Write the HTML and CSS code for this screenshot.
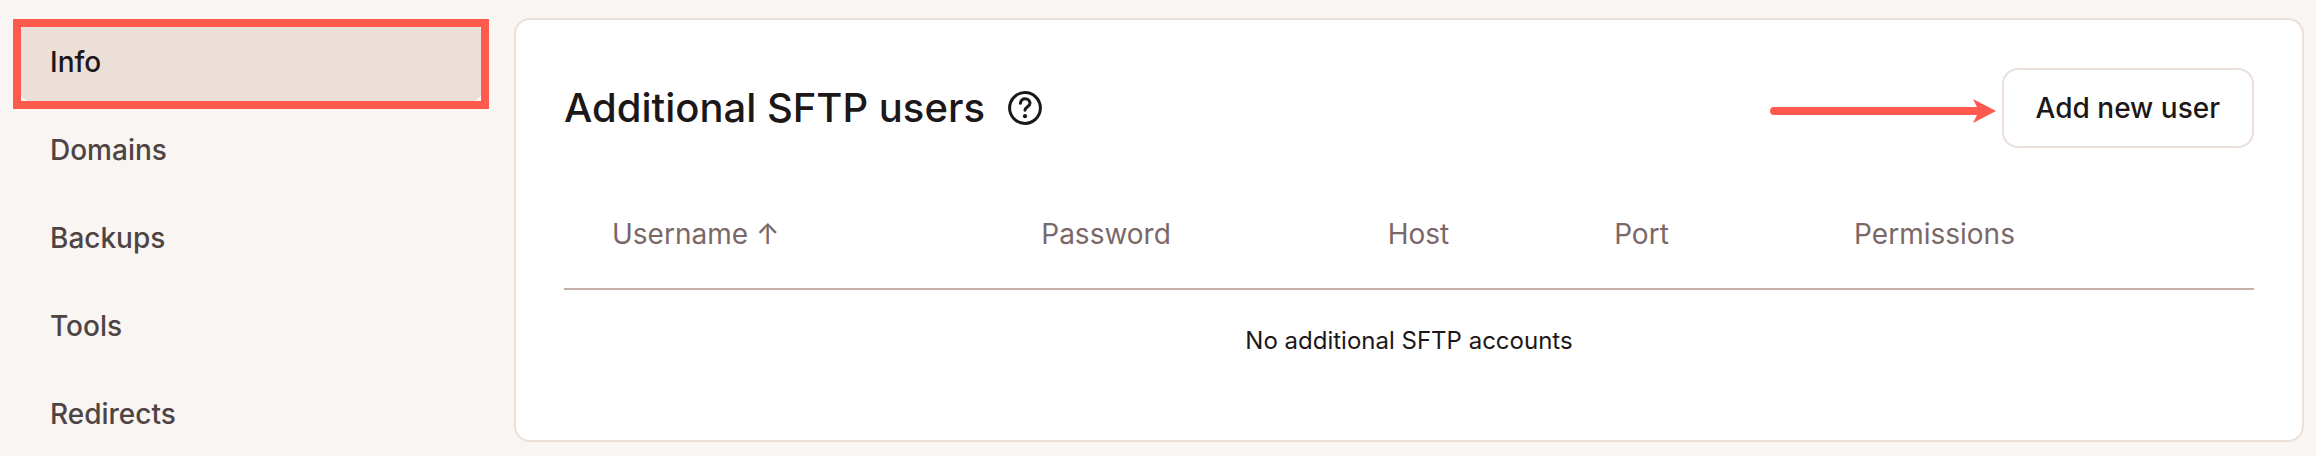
FILE: index.html
```
<!DOCTYPE html>
<html lang="en">
<head>
    <meta charset="UTF-8">
    <meta name="viewport" content="width=device-width, initial-scale=1.0">
    <title>Additional SFTP users</title>
    <link rel="stylesheet" href="styles.css">
</head>
<body>

    <div class="page">
        <!-- Sidebar -->
        <nav class="sidebar">
            <a href="#info" class="nav-link active">Info<span class="highlight"></span></a>
            <a href="#domains" class="nav-link">Domains</a>
            <a href="#backups" class="nav-link">Backups</a>
            <a href="#tools" class="nav-link">Tools</a>
            <a href="#redirects" class="nav-link">Redirects</a>
        </nav>

        <!-- SFTP users -->
        <main class="card">
            <div class="card-header">
                <h2>Additional SFTP users</h2>
                <button type="button" class="help" aria-label="Help">
                    <svg width="40" height="40" viewBox="0 0 40 40" fill="none" stroke="currentColor" stroke-width="3" stroke-linecap="round" stroke-linejoin="round">
                        <circle cx="20" cy="20" r="15.4"/>
                        <path d="M15.4 15.2c.5-2.8 2.3-4.4 4.7-4.4 2.8 0 4.9 1.9 4.9 4.5 0 3.5-4.8 3.5-5 6.9"/>
                        <circle cx="20" cy="28.2" r="2.1" fill="currentColor" stroke="none"/>
                    </svg>
                </button>
                <div class="actions">
                    <svg class="arrow" width="226" height="24" viewBox="0 0 226 24" fill="#ff5a4d">
                        <path d="M4 8H207L203 0L226 12L203 24L207 16H4A4 4 0 0 1 4 8Z"/>
                    </svg>
                    <button type="button" class="btn">Add new user</button>
                </div>
            </div>

            <table>
                <colgroup>
                    <col class="col-username">
                    <col class="col-password">
                    <col class="col-host">
                    <col class="col-port">
                    <col class="col-permissions">
                </colgroup>
                <thead>
                    <tr>
                        <th><button type="button" class="sort">Username ↑</button></th>
                        <th>Password</th>
                        <th>Host</th>
                        <th>Port</th>
                        <th>Permissions</th>
                    </tr>
                </thead>
                <tbody>
                    <tr>
                        <td colspan="5">No additional SFTP accounts</td>
                    </tr>
                </tbody>
            </table>
        </main>
    </div>

</body>
</html>
```

FILE: styles.css
```
* {
    box-sizing: border-box;
}
body {
    font-family: Inter, sans-serif;
    font-size: 28px;
    background-color: #f9f5f2;
    color: #1c1718;
    margin: 0;
}
button {
    font: inherit;
    color: inherit;
    background: none;
    border: none;
    padding: 0;
    cursor: pointer;
}
.page {
    display: flex;
    align-items: flex-start;
    gap: 30px;
    padding: 18px 12px 0 18px;
}
.sidebar {
    display: flex;
    flex-direction: column;
    gap: 8px;
    flex: 0 0 466px;
    padding-top: 4px;
}
.nav-link {
    position: relative;
    padding: 0 32px;
    line-height: 80px;
    border-radius: 16px;
    font-weight: 500;
    color: #4f4444;
    text-decoration: none;
}
.active {
    background-color: #ebdfd8;
    color: #1c1718;
}
/* frame around the current item */
.highlight {
    position: absolute;
    top: -3px;
    right: -5px;
    bottom: -7px;
    left: -5px;
    border: 8px solid #ff5a4d;
}
.card {
    flex: 1;
    padding: 48px;
    background-color: #fff;
    border: 2px solid #ebdfd8;
    border-radius: 16px;
}
.card-header {
    display: flex;
    align-items: center;
}
h2 {
    margin: 0;
    font-size: 40px;
    font-weight: 500;
    line-height: 48px;
}
.help {
    display: flex;
    margin-left: 20px;
}
.actions {
    display: flex;
    align-items: center;
    gap: 6px;
    margin-left: auto;
}
.arrow {
    margin-top: 6px;
}
.btn {
    padding: 0 32px;
    line-height: 76px;
    font-weight: 500;
    background-color: #fff;
    border: 2px solid #ebdfd8;
    border-radius: 16px;
}
table {
    width: 100%;
    margin-top: 32px;
    table-layout: fixed;
    border-collapse: separate;
    border-spacing: 0;
}
.col-username {
    width: 25.4%;
}
.col-password {
    width: 20.5%;
}
.col-host {
    width: 13.4%;
}
.col-port {
    width: 14.2%;
}
.col-permissions {
    width: 26.5%;
}
th {
    padding: 36px 48px;
    line-height: 36px;
    font-weight: 400;
    text-align: left;
    color: #7b6767;
    border-bottom: 2px solid #c8b0aa;
}
.sort {
    display: block;
    line-height: 36px;
}
td {
    padding: 32px 48px;
    font-size: 24px;
    line-height: 38px;
    text-align: center;
}
```
